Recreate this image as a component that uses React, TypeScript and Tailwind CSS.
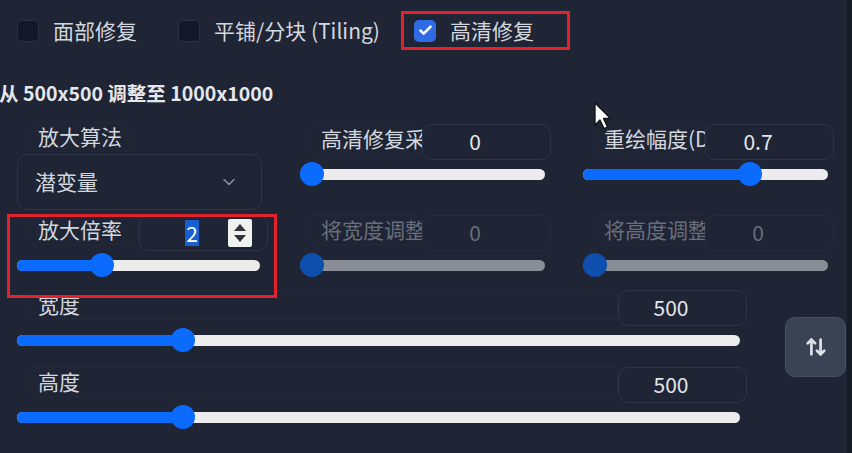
import React from "react";
import { ArrowUpDown, ChevronDown, Check } from "lucide-react";

type CheckProps = { checked?: boolean; label: string };

const CheckItem = ({ checked, label }: CheckProps) => (
  <div className="flex items-center gap-[14px]">
    {checked ? (
      <span className="w-[22px] h-[22px] rounded-[5px] bg-[#2f6be4] flex items-center justify-center">
        <Check size={15} strokeWidth={4} className="text-white" />
      </span>
    ) : (
      <span className="w-[22px] h-[22px] rounded-[5px] bg-[#121828] border border-[#2a3142]" />
    )}
    <span className="text-[21px] leading-none text-[#d3d7de] whitespace-nowrap">{label}</span>
  </div>
);

const Label = ({ text, dim }: { text: string; dim?: boolean }) => (
  <span
    className={`ml-[10px] px-[10px] h-[30px] flex items-center whitespace-nowrap text-[21px] rounded-[3px] border border-[#222838] ${
      dim ? "text-[#686e7c]" : "text-[#d3d7de]"
    }`}
  >
    {text}
  </span>
);

type SliderProps = { pct: number; disabled?: boolean; pr: string };

const Slider = ({ pct, disabled, pr }: SliderProps) => (
  <div className={`h-[28px] flex items-center ${pr}`}>
    <div className={`relative h-[11px] w-full rounded-full ${disabled ? "bg-[#888d96]" : "bg-[#ececec]"}`}>
      {!disabled && (
        <div
          className="absolute left-0 top-0 h-full rounded-full bg-[#0b6bff]"
          style={{ width: `calc(${pct} * (100% - 24px) + 12px)` }}
        />
      )}
      <div
        className={`absolute top-1/2 -translate-y-1/2 w-[24px] h-[24px] rounded-full ${disabled ? "bg-[#0e4fae]" : "bg-[#0b6bff]"}`}
        style={{ left: `calc(${pct} * (100% - 24px))` }}
      />
    </div>
  </div>
);

type FieldProps = {
  label: string;
  value: string;
  pct: number;
  disabled?: boolean;
  spinner?: boolean;
  pr?: string;
};

const Field = ({ label, value, pct, disabled, spinner, pr = "pr-[6px]" }: FieldProps) => (
  <div className="flex flex-col">
    <div className="flex h-[36px]">
      <div className="flex-1 min-w-0 overflow-hidden">
        <Label text={label} dim={disabled} />
      </div>
      <div
        className={`relative shrink-0 w-[129px] h-[36px] rounded-[10px] border flex items-center justify-center pr-[23px] text-[21px] ${
          disabled ? "border-[#262c3c] text-[#686e7c]" : "border-[#2e3546] text-[#e3e6ea]"
        }`}
      >
        {spinner ? (
          <>
            <span className="bg-[#1a5fd0] text-white px-[1px] leading-[26px]">{value}</span>
            <span className="absolute right-[15px] top-[3px] w-[24px] h-[28px] bg-[#f1f1f1] rounded-[2px] flex flex-col items-center justify-center gap-[4px]">
              <span className="w-0 h-0 border-l-[6px] border-r-[6px] border-b-[7px] border-l-transparent border-r-transparent border-b-[#333]" />
              <span className="w-0 h-0 border-l-[6px] border-r-[6px] border-t-[7px] border-l-transparent border-r-transparent border-t-[#333]" />
            </span>
          </>
        ) : (
          <span>{value}</span>
        )}
      </div>
    </div>
    <Slider pct={pct} disabled={disabled} pr={pr} />
  </div>
);

export default function App() {
  return (
    <div
      className="w-[852px] h-[453px] bg-[#151a25] overflow-hidden"
      style={{ fontFamily: '"Noto Sans CJK SC", "Noto Sans", sans-serif' }}
    >
      <div className="relative w-[847px] h-[453px] bg-[#1f2535]">
        {/* checkbox row */}
        <div className="flex items-center pt-[11px] pl-[17px] h-[50px]">
          <div className="w-[161px]">
            <CheckItem label="面部修复" />
          </div>
          <div className="w-[223px]">
            <CheckItem label="平铺/分块 (Tiling)" />
          </div>
          <div className="w-[169px] h-[39px] border-[3px] border-[#e3222b] pl-[10px] flex items-center">
            <CheckItem checked label="高清修复" />
          </div>
        </div>

        <div className="mt-[30px] h-[26px] leading-[26px] -ml-[1px] text-[19.5px] font-semibold text-[#e4e7eb] whitespace-nowrap">
          从 500x500 调整至 1000x1000
        </div>

        {/* hires options */}
        <div className="mt-[16px] pl-[17px] grid grid-cols-[251px_251px_251px] gap-x-[32px]">
          <div className="flex flex-col">
            <div className="flex">
              <Label text="放大算法" />
            </div>
            <div className="mt-[2px] w-[245px] h-[56px] rounded-[10px] border border-[#2e3546] flex items-center justify-between pl-[17px] pr-[22px]">
              <span className="text-[21px] text-[#d3d7de]">潜变量</span>
              <ChevronDown size={20} strokeWidth={1.75} className="text-[#8d939e]" />
            </div>
          </div>
          <div className="mt-[2px]">
            <Field label="高清修复采样步数" value="0" pct={0} />
          </div>
          <div className="mt-[2px]">
            <Field label="重绘幅度(Denoising)" value="0.7" pct={0.7} />
          </div>
        </div>

        <div className="mt-[5px] pl-[17px] grid grid-cols-[251px_251px_251px] gap-x-[32px]">
          <div className="relative">
            <Field label="放大倍率" value="2" pct={1 / 3} spinner pr="pr-[8px]" />
            <div className="absolute -left-[10px] -right-[9px] -top-[1px] h-[84px] border-[3px] border-[#e3222b] pointer-events-none" />
          </div>
          <Field label="将宽度调整到" value="0" pct={0} disabled />
          <Field label="将高度调整到" value="0" pct={0} disabled />
        </div>

        {/* width / height */}
        <div className="mt-[11px] pl-[17px] flex">
          <div className="w-[730px] flex flex-col gap-[13px]">
            <Field label="宽度" value="500" pct={0.22} pr="pr-[7px]" />
            <Field label="高度" value="500" pct={0.22} pr="pr-[7px]" />
          </div>
          <button className="ml-[38px] mt-[27px] w-[61px] h-[60px] rounded-[10px] bg-[#3a4354] border border-[#465063] flex items-center justify-center">
            <ArrowUpDown size={22} strokeWidth={3} className="text-[#dde0e5]" />
          </button>
        </div>

        {/* mouse cursor */}
        <svg className="absolute left-[593px] top-[101px]" width="20" height="30" viewBox="0 0 20 30">
          <path
            d="M2 2 L2 24 L7 19 L11 27.5 L14.5 26 L10.5 17.5 L17.5 17.5 Z"
            fill="#ffffff"
            stroke="#111"
            strokeWidth="1.3"
            strokeLinejoin="round"
          />
        </svg>
      </div>
    </div>
  );
}
